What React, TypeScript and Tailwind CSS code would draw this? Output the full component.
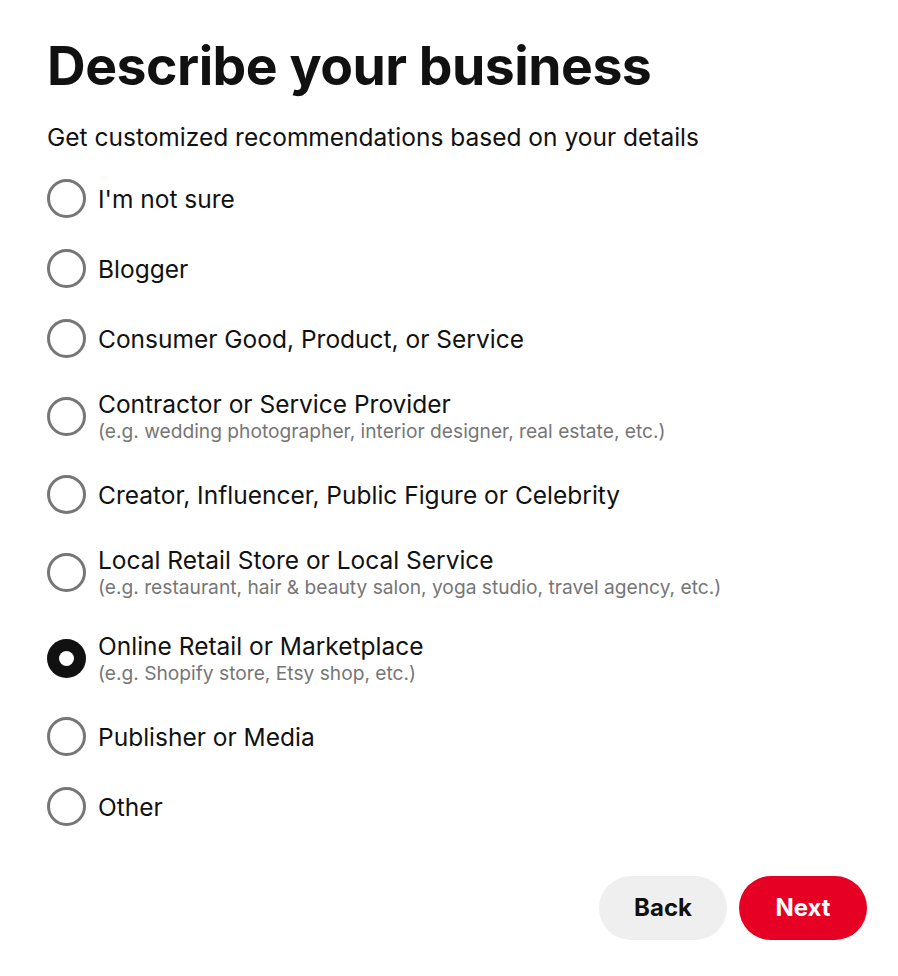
import { useState } from "react";

type Option = {
  label: string;
  hint?: string;
};

const options: Option[] = [
  { label: "I'm not sure" },
  { label: "Blogger" },
  { label: "Consumer Good, Product, or Service" },
  {
    label: "Contractor or Service Provider",
    hint: "(e.g. wedding photographer, interior designer, real estate, etc.)",
  },
  { label: "Creator, Influencer, Public Figure or Celebrity" },
  {
    label: "Local Retail Store or Local Service",
    hint: "(e.g. restaurant, hair & beauty salon, yoga studio, travel agency, etc.)",
  },
  {
    label: "Online Retail or Marketplace",
    hint: "(e.g. Shopify store, Etsy shop, etc.)",
  },
  { label: "Publisher or Media" },
  { label: "Other" },
];

function Radio({ checked }: { checked: boolean }) {
  if (checked) {
    return (
      <span className="flex h-[39px] w-[39px] shrink-0 items-center justify-center rounded-full bg-[#111111]">
        <span className="h-[15px] w-[15px] rounded-full bg-white" />
      </span>
    );
  }
  return (
    <span className="h-[39px] w-[39px] shrink-0 rounded-full border-[3px] border-[#767676] bg-white" />
  );
}

export default function App() {
  const [selected, setSelected] = useState(6);

  return (
    <div className="min-h-screen bg-white font-['Inter',sans-serif] text-[#111111]">
      <div className="pl-[47px] pr-[31px] pt-[34px]">
        <h1 className="text-[53.5px] font-bold leading-[64px] tracking-[-0.5px]">
          Describe your business
        </h1>
        <p className="mt-[24px] text-[24.5px] leading-[30px]">
          Get customized recommendations based on your details
        </p>

        <div className="mt-[27px] flex flex-col gap-[31px]">
          {options.map((opt, i) => (
            <label
              key={opt.label}
              onClick={() => setSelected(i)}
              className="flex cursor-pointer items-center gap-[12px]"
            >
              <Radio checked={selected === i} />
              <div className="flex flex-col">
                <span className="text-[24.5px] leading-[30px]">{opt.label}</span>
                {opt.hint && (
                  <span className="text-[19.2px] leading-[25px] text-[#767676]">
                    {opt.hint}
                  </span>
                )}
              </div>
            </label>
          ))}
        </div>

        <div className="mt-[50px] flex justify-end gap-[12px]">
          <button className="h-[64px] w-[128px] rounded-full bg-[#efefef] text-[24px] font-bold text-[#111111]">
            Back
          </button>
          <button className="h-[64px] w-[128px] rounded-full bg-[#e60023] text-[24px] font-bold text-white">
            Next
          </button>
        </div>
      </div>
    </div>
  );
}
